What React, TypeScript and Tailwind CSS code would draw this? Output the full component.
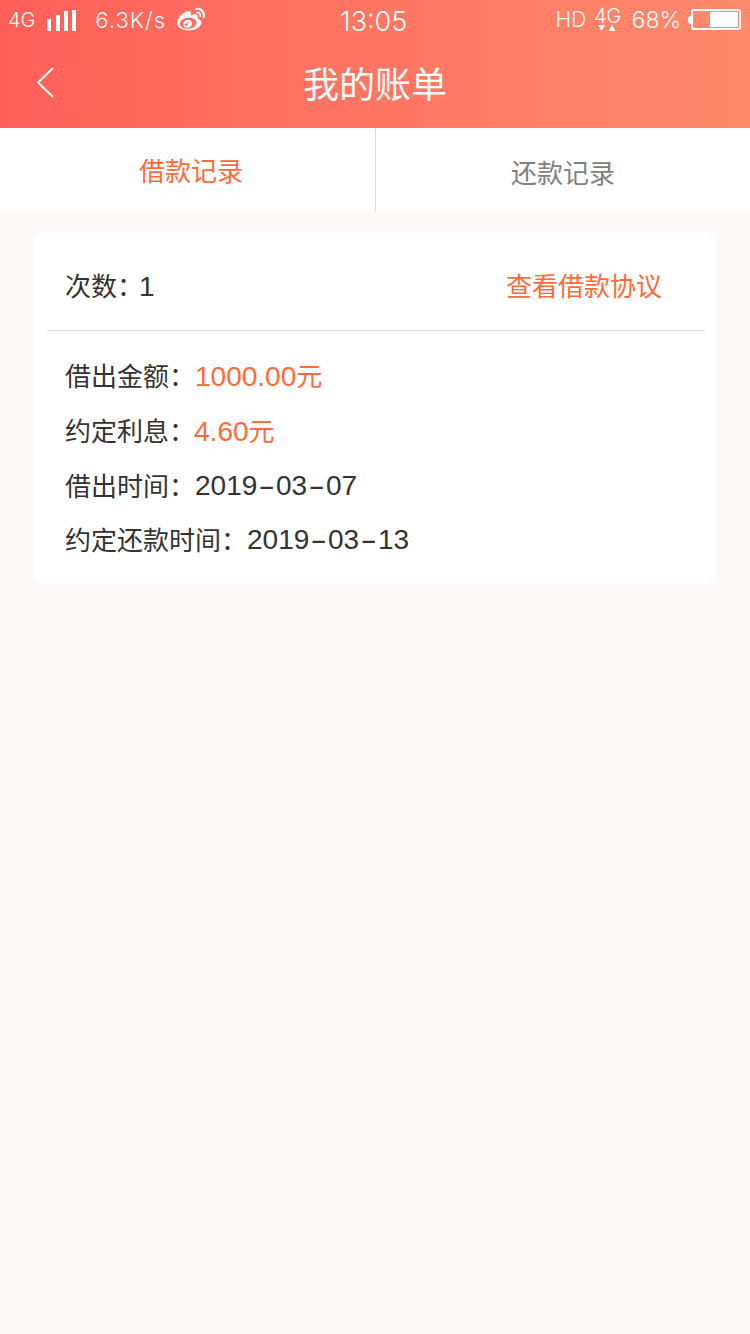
import React from 'react';
import { FaWeibo } from 'react-icons/fa';

const valueFont = "font-['Liberation_Sans','Noto_Sans_CJK_SC',sans-serif]";

const details = [
  { label: '借出金额', value: '1000.00', unit: '元', accent: true, height: 'h-[55px]', colon: 'tracking-normal' },
  { label: '约定利息', value: '4.60', unit: '元', accent: true, height: 'h-[55px]', colon: 'tracking-[-1px]' },
  { label: '借出时间', value: '2019-03-07', unit: '', accent: false, height: 'h-[54px]', colon: 'tracking-normal' },
  { label: '约定还款时间', value: '2019-03-13', unit: '', accent: false, height: 'h-[54px]', colon: 'tracking-normal' },
];

// the hyphen in the dates is drawn much longer than the font's own
const renderValue = (value: string) =>
  value.split(/(-)/).map((part, i) =>
    part === '-' ? (
      <span key={i} className="mx-[4.700px] inline-block scale-x-[1.800]">
        -
      </span>
    ) : (
      part
    )
  );

const StatusBar: React.FC = () => (
  <div className="relative flex h-[44px] items-start justify-between pl-2 pr-[9px] pt-[7px] text-white">
    <div className="-mt-[1px] flex items-center">
      <span className="text-[20px] leading-[22px] font-light">4G</span>
      <div className="ml-[12px] flex items-end gap-[4.300px]">
        <div className="h-[12px] w-[4px] bg-white" />
        <div className="h-[16px] w-[4px] bg-white" />
        <div className="h-[20px] w-[4px] bg-white" />
        <div className="h-[21px] w-[4px] bg-white" />
      </div>
      <span className="ml-[19px] text-[22px] leading-[22px] font-light tracking-[1px]">6.3K/s</span>
      <FaWeibo className="ml-[11px] text-[28px]" />
    </div>
    {/* clock is placed by hand, the side groups have different widths */}
    <span className="absolute left-[340px] top-[5px] text-[27px] leading-[34px] font-light">13:05</span>
    <div className="flex items-center">
      <span className="text-[21px] leading-[22px] font-light">HD</span>
      <div className="ml-[8px] flex flex-col items-center">
        <span className="text-[20px] leading-[18px] font-light tracking-[-0.5px]">4G</span>
        <svg width="20" height="7" viewBox="0 0 20 7" fill="white">
          <path d="M1 0h7L4.500 6z" />
          <path d="M15 0l3.500 6h-7z" />
        </svg>
      </div>
      <span className="ml-[11px] text-[23px] leading-[22px] font-light">68%</span>
      <div className="ml-[7px] h-[8px] w-[3px] rounded-l-sm bg-white" />
      <div className="flex h-[21px] w-[50px] justify-end rounded-[3px] border-2 border-white p-px">
        <div className="h-full w-[28px] bg-white" />
      </div>
    </div>
  </div>
);

const App: React.FC = () => {
  return (
    <div className="flex min-h-[1334px] flex-col bg-[#fdf9f8] font-['Inter','Noto_Sans_CJK_SC',sans-serif]">
      <header className="h-[128px] bg-gradient-to-r from-[#ff5f59] to-[#ff8a6c]">
        <StatusBar />
        <div className="relative flex h-[84px] items-center justify-center pb-[2px] text-white">
          <svg
            className="absolute left-[36px] top-[23px]"
            width="18"
            height="31"
            viewBox="0 0 18 31"
            fill="none"
            stroke="white"
            strokeWidth="2"
          >
            <path d="M17 1L2 15.500 17 30" />
          </svg>
          <span className="text-[36px] leading-none">我的账单</span>
        </div>
      </header>

      <div className="flex h-[83px] bg-white">
        <div className="flex w-[376px] items-center justify-center border-r border-[#d9d9d9] pl-[7px] pt-[4px] text-[26px] text-[#ff6a39]">
          借款记录
        </div>
        <div className="flex flex-1 items-center justify-center pt-[7px] text-[26px] text-[#808080]">
          还款记录
        </div>
      </div>

      <div className="mx-[33px] mt-[21px] w-[683px] rounded-[10px] bg-white pl-[14px] pr-[11px]">
        <div className="flex h-[99px] items-center justify-between border-b border-[#d9d9d9] pl-[18px] pr-[43px] pt-[11px]">
          <span className="text-[26px] text-[#333333]">
            次数<span className="tracking-[-4px]">：</span>
            <span className={`${valueFont} text-[28px]`}>1</span>
          </span>
          <span className="text-[26px] text-[#ff6a39]">查看借款协议</span>
        </div>
        <div className="pb-[17px] pl-[18px] pt-[18px]">
          {details.map((row) => (
            <div key={row.label} className={`flex items-center ${row.height} text-[26px] text-[#333333]`}>
              <span>
                {row.label}
                <span className={row.colon}>：</span>
              </span>
              <span className={`${valueFont} text-[28px] ${row.accent ? 'text-[#ff6a39]' : ''}`}>
                {renderValue(row.value)}
              </span>
              {row.unit && <span className="text-[26px] text-[#ff6a39]">{row.unit}</span>}
            </div>
          ))}
        </div>
      </div>
    </div>
  );
};

export default App;
